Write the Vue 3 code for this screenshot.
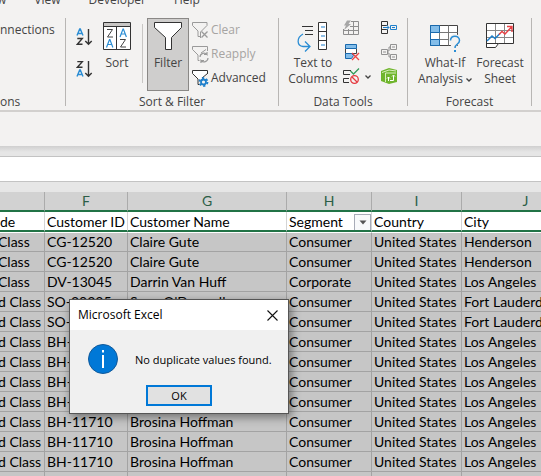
<script setup>
const tabs = ['w', 'View', 'Developer', 'Help']
const columns = [
  { id: 'E', label: '', width: 45 },
  { id: 'F', label: 'F', width: 83 },
  { id: 'G', label: 'G', width: 159 },
  { id: 'H', label: 'H', width: 85 },
  { id: 'I', label: 'I', width: 90 },
  { id: 'J', label: 'J', width: 128 },
]
const headers = ['de', 'Customer ID', 'Customer Name', 'Segment', 'Country', 'City']
const us = 'United States'
const hoffman = ['d Class', 'BH-11710', 'Brosina Hoffman', 'Consumer', us, 'Los Angeles']
const rows = [
  ['Class', 'CG-12520', 'Claire Gute', 'Consumer', us, 'Henderson'],
  ['Class', 'CG-12520', 'Claire Gute', 'Consumer', us, 'Henderson'],
  ['Class', 'DV-13045', 'Darrin Van Huff', 'Corporate', us, 'Los Angeles'],
  ['d Class', 'SO-20335', "Sean O'Donnell", 'Consumer', us, 'Fort Lauderdale'],
  ['d Class', 'SO-20335', "Sean O'Donnell", 'Consumer', us, 'Fort Lauderdale'],
  hoffman, hoffman, hoffman, hoffman, hoffman, hoffman, hoffman,
  ['', '', '', '', '', ''],
]
</script>

<template>
  <main class="app">
    <nav class="tabs">
      <a v-for="t in tabs" :key="t" href="#">{{ t }}</a>
    </nav>

    <div class="ribbon">
      <section class="group connections">
        <div class="body"><button class="plain">nnections</button></div>
        <h2>ons</h2>
      </section>

      <section class="group sorting">
        <div class="body">
          <div class="stack sorts">
            <button aria-label="Sort A to Z">
              <svg width="18" height="18" viewBox="0 0 18 18" fill="none" stroke-width="1.4">
                <path d="M1 7.500 3.700 1h.6L7 7.500M2 5.500h4" stroke="#2a8dd4" />
                <path d="M1.300 10.500h5L1.300 16.300h5.200" stroke="#333" />
                <path d="M12.500 1v15M9.300 13l3.200 3.200L15.700 13" stroke="#333" />
              </svg>
            </button>
            <button aria-label="Sort Z to A">
              <svg width="18" height="18" viewBox="0 0 18 18" fill="none" stroke-width="1.400">
                <path d="M1.300 1.600h5L1.300 7.300h5.200" stroke="#333" />
                <path d="M1 16.500 3.700 10h.6L7 16.500M2 14.500h4" stroke="#2a8dd4" />
                <path d="M12.500 1v15M9.300 13l3.200 3.200L15.700 13" stroke="#333" />
              </svg>
            </button>
          </div>
          <button class="large sort">
            <svg width="28" height="30" viewBox="0 0 28 30" fill="none">
              <path d="M.5.5h27v27H.5z" fill="#fff" stroke="#333" />
              <path d="M1 1h26v3H1z" fill="#c8c6c4" />
              <path d="M0 4.500h28M13.500 5v23" stroke="#333" />
              <path d="M4 7.500h5.500l-5 7.500h5.500M17 17.500h5.500l-5 7.500h5.500" stroke="#444" />
              <path d="m3.500 25.500 3-8h.4l3 8M4.500 22.500h4.500M17 15l3-8h.4l3 8M18 12h4.500" stroke="#2a8dd4" stroke-width="1.200" />
            </svg>
            <span>Sort</span>
          </button>
          <i class="rule"></i>
          <button class="large filter" aria-pressed="true">
            <svg width="28" height="30" viewBox="0 0 28 30">
              <path d="M.5.500h27v5L17.500 15.500v12h-6v-12L.5 5.500z" fill="#fff" stroke="#333" />
            </svg>
            <span>Filter</span>
          </button>
          <div class="stack filters">
            <button class="small" disabled>
              <svg width="17" height="17" viewBox="0 0 17 17" fill="none" stroke="#9a9a9a">
                <path d="M8.500 16V10l6.500-6.500v-3H.5v3L6 9v5.500h2" />
                <path d="m9.500 9.500 6 6m0-6-6 6" stroke-width="1.300" />
              </svg>
              Clear
            </button>
            <button class="small" disabled>
              <svg width="17" height="17" viewBox="0 0 17 17" fill="none" stroke="#9a9a9a">
                <path d="M15.500 5V.5H.5v3L6 9v5.500h1.500M9 7l5-3.500" />
                <path d="M8 11a4 4 0 0 1 7-2.500V6m0 2.500h-3M16 12a4 4 0 0 1-7 2.500V17m0-2.500h3" stroke-width="1.200" />
              </svg>
              Reapply
            </button>
            <button class="small">
              <svg width="17" height="17" viewBox="0 0 17 17" fill="none">
                <path d="M.5.500h15v3L10 8.500 6 9 .5 3.500z" fill="#fff" />
                <path d="M15.500 4V.5H.5v3L6 9v5.500h1.500M10 8l5.500-4.500" stroke="#333" />
                <circle cx="11.500" cy="12" r="2.500" stroke="#1e7fcb" stroke-width="1.800" />
                <circle cx="11.500" cy="12" r="4" stroke="#1e7fcb" stroke-width="1.800" stroke-dasharray="2.200 2" />
              </svg>
              Advanced
            </button>
          </div>
        </div>
        <h2>Sort &amp; Filter</h2>
      </section>

      <section class="group tools">
        <div class="body">
          <button class="large columns">
            <svg width="32" height="30" viewBox="0 0 32 30" fill="none">
              <path d="M5 4.500h11M8 8.500h8M8 12.500h8" stroke="#333" />
              <path d="M21.500.5h8v27h-8zM21 9.500h9M21 18.500h9" fill="#fff" stroke="#333" />
              <path d="M24 5h4M24 14h4M24 23h4" stroke="#1e7fcb" stroke-width="1.200" />
              <path d="M6 12C-1 16 0 24 6 24.500h6.500M8 19.500l5 5-5 5" stroke="#2a8dd4" stroke-width="1.300" />
            </svg>
            <span>Text to<br />Columns</span>
          </button>
          <div class="stack icons">
            <button aria-label="Flash Fill" disabled>
              <svg width="17" height="17" viewBox="0 0 17 17" fill="none" stroke="#8e8e8e">
                <path d="M8 1.500h7.500v13H.5V9M.5 10.500h15M7 6.500h8.500M5.500 9v5.500M10.500 1.500v13" />
                <path d="M4 .5h4L5.500 4H8L1 10l2-4.500H1z" fill="#a6a6a6" stroke="none" />
              </svg>
            </button>
            <button aria-label="Remove Duplicates">
              <svg width="17" height="17" viewBox="0 0 17 17" fill="none">
                <path d="M2.500 4.500v5h11v-5" stroke="#444" fill="#fff" />
                <path d="M2.500.5h11v4h-11zM2.500 9.500h6l2 2-2 3h-6z" fill="#83bde9" stroke="#1969ad" />
                <path d="m9 9 7 7m0-7-7 7" stroke="#e44" stroke-width="1.300" />
              </svg>
            </button>
            <button class="split" aria-label="Data Validation">
              <svg width="17" height="17" viewBox="0 0 17 17" fill="none">
                <path d="M8 2.500H.5v4H7M6 10.500H.5v4H6" stroke="#333" />
                <path d="m7.500 3 3 3L16 .500" stroke="#359b5c" stroke-width="1.300" />
                <circle cx="11.500" cy="11.500" r="3.800" stroke="#e5393f" stroke-width="1.300" />
                <path d="m9 9 5 5" stroke="#e5393f" stroke-width="1.300" />
              </svg>
              <svg class="chev" width="6" height="4" viewBox="0 0 6 4" fill="none"><path d="m.5.5 2.500 2.500L5.500.5" stroke="#444" stroke-width="1.300" /></svg>
            </button>
          </div>
          <div class="stack icons second">
            <button aria-label="Consolidate">
              <svg width="17" height="17" viewBox="0 0 17 17" fill="none">
                <path d="M.5 1.500h6v4h-6zM.5 9.500h6v4h-6zM.5 5v5" stroke="#333" />
                <path d="M9.500 5.500h6v4h-6zM11 7.500h3M2 7.500h6M5.500 5l2.500 2.500L5.500 10" stroke="#1e7fcb" />
              </svg>
            </button>
            <button aria-label="Relationships" disabled>
              <svg width="17" height="17" viewBox="0 0 17 17" fill="none" stroke="#929292">
                <path d="M.5 5.500h6v5h-6zM9.500.5h6v5h-6zM9.500 10.500h6v5h-6zM2 8h3M11 3h3M11 13h3M6.500 7H8V3h1.500M6.500 9H8v4h1.500" />
              </svg>
            </button>
            <button aria-label="Manage Data Model">
              <svg width="17" height="17" viewBox="0 0 17 17" fill="none">
                <path d="M0 3 8 0l8 2v12l-8 2-8-3z" fill="#6fb52c" />
                <path d="M1 4.500 8 2l7 1M4.500 5v9M4.500 5H15" stroke="#d8efbd" />
                <path d="M7.500 13V9m-1.500 1.500L7.500 9 9 10.500M9 12.500h3.500v-5m-1.500 1L12.500 7 14 8.500" stroke="#fff" />
              </svg>
            </button>
          </div>
        </div>
        <h2>Data Tools</h2>
      </section>

      <section class="group forecast">
        <div class="body">
          <button class="large whatif">
            <svg width="32" height="30" viewBox="0 0 32 30" fill="none">
              <path d="M1.500 3.500h27v20h-27z" fill="#fff" stroke="#444" />
              <path d="M10.500 3.500v20M19.500 3.500v20M1.500 10.500h27M1.500 17.500h27" stroke="#777" />
              <path d="M1.500 3.500h9v7h-9zM1.500 17.500h9v6h-9z" fill="#83bde9" stroke="#1969ad" />
              <path d="M1.500 10.500v7" stroke="#1969ad" />
              <path d="M20 18c0-8 11-8 11 0 0 4-3 4-4 7v5h-4v-6h-1z" fill="#f3f2f1" />
              <path d="M21.500 18.500c0-6 9-5.500 9 0 0 4-4.500 3-4.500 7.500" stroke="#2a8dd4" stroke-width="1.500" />
              <path d="M25 28h2v2h-2z" fill="#2a8dd4" />
            </svg>
            <span>What-If<br />Analysis <svg class="chev" width="6" height="4" viewBox="0 0 6 4" fill="none"><path d="m.5.5 2.500 2.500L5.500.5" stroke="#444" stroke-width="1.300" /></svg></span>
          </button>
          <button class="large sheet">
            <svg width="28" height="30" viewBox="0 0 28 30" fill="none">
              <path d="M.5 1.500h27v20h-15l-3 4h-9z" fill="#fff" stroke="#333" />
              <path d="M9.500 2v19M18.500 2v19M1 8.500h26M1 15.500h26" stroke="#888" />
              <path d="M.5 21.500h12" stroke="#333" />
              <path d="m1 19 5-5 3 2.500 5-5" stroke="#1e7fcb" stroke-width="1.500" />
              <path d="m13 12.500 3-3 3 2.500L25.500 5M21 4.500h5V10" stroke="#e84145" stroke-width="1.400" />
            </svg>
            <span>Forecast<br />Sheet</span>
          </button>
        </div>
        <h2>Forecast</h2>
      </section>
    </div>

    <div class="ribbon-foot"></div>
    <div class="formula"><input aria-label="Formula bar" /></div>

    <div class="grid">
      <table>
        <colgroup><col v-for="c in columns" :key="c.id" :style="{ width: c.width + 'px' }" /></colgroup>
        <thead>
          <tr class="letters"><th v-for="c in columns" :key="c.id">{{ c.label }}</th></tr>
          <tr class="names">
            <th v-for="h in headers" :key="h">
              <div class="name">{{ h }}<button v-if="h === 'Segment'" aria-label="Filter Segment"><svg width="8" height="5" viewBox="0 0 8 5"><path d="M.5.5h7L4 4.500z" fill="#555" /></svg></button></div>
            </th>
          </tr>
        </thead>
        <tbody>
          <tr v-for="(r, i) in rows" :key="i"><td v-for="(v, j) in r" :key="j">{{ v }}</td></tr>
        </tbody>
      </table>
    </div>

    <section class="dialog" role="dialog" aria-labelledby="dialog-title">
      <header>
        <span id="dialog-title">Microsoft Excel</span>
        <button aria-label="Close"><svg width="11" height="11" viewBox="0 0 11 11"><path d="m.5.5 10 10m0-10-10 10" stroke="#111" stroke-width="1.100" /></svg></button>
      </header>
      <div class="message">
        <svg width="30" height="30" viewBox="0 0 30 30">
          <circle cx="15" cy="15" r="14.500" fill="#0078d7" stroke="#10599a" />
          <path d="M14 6h2v2.500h-2zM14 11h2v13h-2z" fill="#fff" />
        </svg>
        <p>No duplicate values found.</p>
      </div>
      <footer><button>OK</button></footer>
    </section>
  </main>
</template>

<style>
body { margin: 0; background: #e6e6e6; overflow: hidden; }
</style>

<style scoped>
* { box-sizing: border-box; }
.app { position: relative; height: 100vh; overflow: hidden; font: 12px/16px "Open Sans", "Noto Sans", sans-serif; color: #444; }
button { font: inherit; color: inherit; background: none; border: 0; padding: 0; margin: 0; display: block; text-align: left; white-space: nowrap; }
svg { display: block; flex: none; }
.tabs { display: flex; align-items: flex-end; gap: 28px; height: 18px; padding: 0 0 10px; background: #f3f2f1; overflow: hidden; }
.tabs a { color: #444; text-decoration: none; }
.tabs a:first-child { margin-left: -3px; }
.ribbon { display: flex; background: #f3f2f1; border-bottom: 2px solid #d2d0ce; }
.group { display: flex; flex-direction: column; flex: none; padding-right: 1px; background: linear-gradient(#b8b6b4, #b8b6b4) right top / 1px 88px no-repeat; }
.group h2 { margin: 0; font-size: 12px; line-height: 16px; font-weight: 400; text-align: center; }
.body { display: flex; height: 76px; align-items: flex-start; }
.connections { width: 66px; }
.connections .plain { margin-top: 4px; }
.connections h2 { text-align: left; }
.sorting { width: 213px; }
.tools { width: 129px; }
.forecast { width: 124px; }
.large { display: flex; flex-direction: column; align-items: center; gap: 3px; text-align: center; padding-top: 4px; }
.large span { display: block; text-align: center; }
.stack { display: flex; flex-direction: column; }
.sorts { gap: 14px; padding: 10px 0 0 10px; width: 35px; }
.sort { width: 32px; }
.rule { width: 1px; height: 59px; margin: 6px 4px 0 9px; background: #c8c6c4; }
.filter { width: 42px; height: 73px; padding-top: 3px; border: 1px solid #8a8886; background: #cfcecd; }
.filters { padding: 4px 0 0 3px; gap: 8px; }
.small { display: flex; gap: 2px; align-items: center; height: 16px; }
.small:disabled { color: #a6a4a2; }
.columns { width: 60px; margin-left: 4px; }
.icons { padding-top: 2px; gap: 7px; width: 38px; }
.split { display: flex; align-items: center; gap: 5px; }
.second { width: 18px; }
.chev { display: inline-block; vertical-align: middle; }
.whatif { width: 60px; margin-left: 7px; }
.sheet { width: 50px; }
.ribbon-foot { height: 34px; background: #f3f2f1; }
.formula { height: 46px; padding: 10px 0; background: linear-gradient(#cfcfcf, #e6e6e6 6px); }
.formula input { display: block; width: 100%; height: 26px; border: solid #c3c3c3; border-width: 1px 0; background: #fff; padding: 0; border-radius: 0; }
table { table-layout: fixed; width: 590px; border-collapse: separate; border-spacing: 0; font: 14px/18px Lato, "Open Sans", sans-serif; color: #000; }
th, td { font-weight: 400; text-align: left; padding: 0 0 0 2px; white-space: nowrap; overflow: hidden; }
th:first-child, td:first-child { padding-left: 0; }
td:first-child { text-indent: -2px; }
.letters th { height: 20px; text-align: center; background: #d2d2d2; color: #2c5e47; border-right: 1px solid #ababab; border-bottom: 2px solid #217346; padding: 0; }
.names th { height: 20px; background: #fff; border-right: 1px solid #d4d4d4; border-bottom: 2px solid #217346; }
.name { display: flex; justify-content: space-between; align-items: center; height: 18px; padding-top: 2px; }
.name button { width: 17px; height: 17px; border: 1px solid #a8acb8; background: #f8f9fb; display: flex; align-items: center; justify-content: center; }
td { height: 20px; background: #c6c6c6; border-right: 1px solid #a3a3a3; border-bottom: 1px solid #a3a3a3; }
tbody tr:first-child td { border-top: 1px solid #fff; line-height: 16px; }
.dialog { position: absolute; left: 69px; top: 299px; width: 220px; border: 1px solid #555; background: #f0f0f0; color: #000; box-shadow: 2px 3px 9px rgba(0, 0, 0, .45); }
.dialog header { display: flex; justify-content: space-between; align-items: center; height: 30px; background: #fff; padding: 0 10px 0 8px; }
.message { display: flex; align-items: center; gap: 17px; padding: 14px 0 0 18px; }
.message p { margin: 0; padding-top: 2px; font-size: 11px; white-space: nowrap; }
.dialog footer { display: flex; justify-content: center; padding: 11px 0 7px; }
.dialog footer button { width: 66px; height: 21px; border: 2px solid #0078d7; background: #e1e1e1; font-size: 11px; line-height: 17px; text-align: center; }
</style>
